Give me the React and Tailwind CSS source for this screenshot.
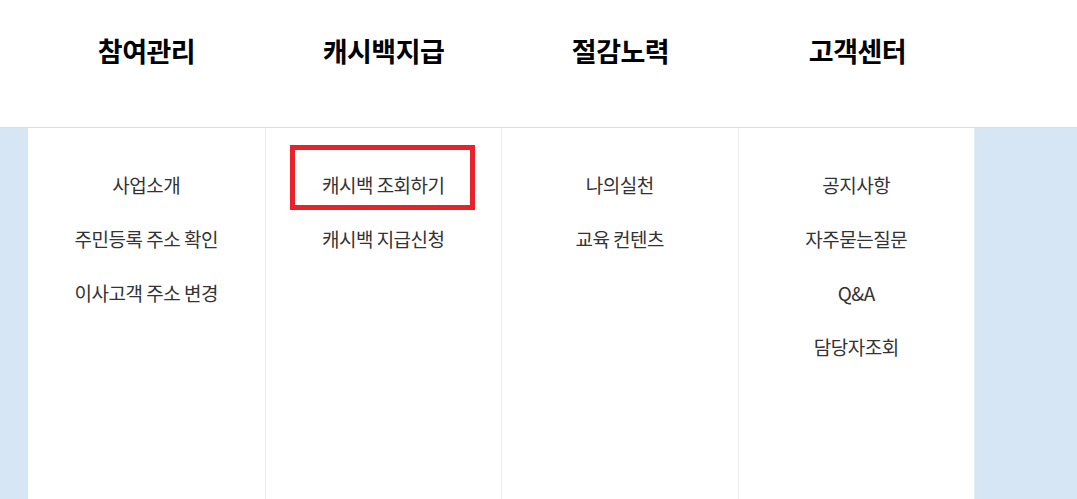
const menus = [
  { title: "참여관리", items: ["사업소개", "주민등록 주소 확인", "이사고객 주소 변경"] },
  { title: "캐시백지급", items: ["캐시백 조회하기", "캐시백 지급신청"], marked: 0 },
  { title: "절감노력", items: ["나의실천", "교육 컨텐츠"] },
  { title: "고객센터", items: ["공지사항", "자주묻는질문", "Q&A", "담당자조회"] },
];

export default function App() {
  return (
    <div
      className="h-[499px] w-[1077px] overflow-hidden bg-white"
      style={{ fontFamily: '"Noto Sans CJK KR", "Noto Sans", sans-serif' }}
    >
      <header className="flex h-[128px] border-b border-[#dcdcdc] pl-[28px]">
        {menus.map((menu) => (
          <div key={menu.title} className="flex w-[237px] items-center justify-center pb-[25px]">
            <h2 className="text-[27px] font-bold tracking-[-0.5px] text-black">{menu.title}</h2>
          </div>
        ))}
      </header>

      <div className="flex h-[371px] bg-[#d6e6f5] pl-[28px]">
        <div className="flex w-[947px] bg-white border-r border-[#e6ecf2]">
          {menus.map((menu, i) => (
            <ul
              key={menu.title}
              className={`w-[237px] pt-[30px] ${i > 0 ? "border-l border-[#ececec]" : ""}`}
            >
              {menu.items.map((item, j) => (
                <li key={item} className="relative flex h-[54px] items-center justify-center">
                  <span className="text-[19px] tracking-[-0.5px] text-[#333]">{item}</span>
                  {menu.marked === j && (
                    <span className="absolute left-[24px] top-[-13px] h-[65px] w-[185px] border-[5px] border-[#e8212b]" />
                  )}
                </li>
              ))}
            </ul>
          ))}
        </div>
      </div>
    </div>
  );
}
